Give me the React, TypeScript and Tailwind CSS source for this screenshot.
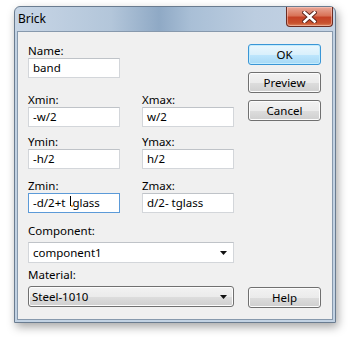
import React from "react";

const font = { fontFamily: '"Noto Sans", "Liberation Sans", sans-serif' };

const Label = ({ text, className = "" }: { text: string; className?: string }) => (
  <div className={"h-[14px] leading-[14px] text-[11.5px] text-black " + className}>{text}</div>
);

const Field = ({ value, focused }: { value: React.ReactNode; focused?: boolean }) => (
  <div
    className={
      "h-[20px] w-[92px] bg-white border pl-[4px] flex items-center text-[11.5px] text-black whitespace-nowrap " +
      (focused ? "border-[#5b9ad8]" : "border-[#d3d6da] border-t-[#bfc3c8]")
    }
  >
    {value}
  </div>
);

const Arrow = () => (
  <svg width="7" height="4" viewBox="0 0 7 4" className="ml-auto mr-[6px]">
    <path d="M0 0h7L3.5 4z" fill="#111" />
  </svg>
);

const Btn = ({ label, primary, className = "" }: { label: string; primary?: boolean; className?: string }) => (
  <div
    className={
      "h-[21px] w-[73px] rounded-[3px] border flex items-center justify-center text-[11.5px] text-black " +
      (primary
        ? "border-[#3a96d6] bg-[linear-gradient(#ebf7fd_0%,#d9f0fc_50%,#bee6fd_51%,#a7d9f5_100%)] shadow-[inset_0_0_0_1px_#c4ecfd] "
        : "border-[#707070] bg-[linear-gradient(#f2f2f2_0%,#ebebeb_50%,#dddddd_51%,#cfcfcf_100%)] shadow-[inset_0_0_0_1px_#fcfcfc] ") +
      className
    }
  >
    {label}
  </div>
);

export default function App() {
  return (
    <div className="w-[349px] h-[342px] bg-white pt-[6px] pl-[14px]" style={font}>
      <div className="w-[322px] h-[317px] flex flex-col border border-[#6a7c90] rounded-t-[6px] bg-[linear-gradient(90deg,#c8d6e6_0%,#b3c6da_30%,#8fa9c5_45%,#a9bfd6_55%,#bccde0_75%,#c4d3e4_100%)] shadow-[2px_4px_10px_rgba(0,0,0,0.35)]">
        <div className="h-[24px] flex items-start">
          <div className="ml-[3px] mt-[4px] text-[12px] leading-[16px] text-black">Brick</div>
          <div className="ml-auto mr-[2px] w-[47px] h-[20px] rounded-b-[4px] border border-t-0 border-[#6b2c22] bg-[linear-gradient(#e9a898_0%,#d97459_45%,#c54226_55%,#c8522f_85%,#dd8a62_100%)] flex items-center justify-center shadow-[inset_0_0_0_1px_rgba(255,210,200,0.5)]">
            <svg width="15" height="12" viewBox="0 0 15 12">
              <path d="M2.5 1.5L12.5 10.5M12.5 1.5L2.5 10.5" stroke="#5a231a" strokeWidth="4.4" strokeLinecap="square" />
              <path d="M2.5 1.5L12.5 10.5M12.5 1.5L2.5 10.5" stroke="#ffffff" strokeWidth="2.6" strokeLinecap="square" />
            </svg>
          </div>
        </div>
        <div className="flex-1 px-[2px] pb-[2px] bg-[#c2d2e3]">
          <div className="h-full border border-[#8799ad] bg-[#f0f0f0] pt-[12px] pb-[11px] px-[10px] flex gap-[14px]">
            <div className="w-[206px] flex flex-col">
              <Label text="Name:" />
              <Field value="band" />
              <div className="grid grid-cols-[92px_92px] gap-x-[22px] mt-[15px]">
                <Label text="Xmin:" />
                <Label text="Xmax:" />
                <Field value="-w/2" />
                <Field value="w/2" />
                <Label text="Ymin:" className="mt-[8px]" />
                <Label text="Ymax:" className="mt-[8px]" />
                <Field value="-h/2" />
                <Field value="h/2" />
                <Label text="Zmin:" className="mt-[10px]" />
                <Label text="Zmax:" className="mt-[10px]" />
                <Field
                  focused
                  value={
                    <>
                      -d/2+t
                      <span className="relative inline-block w-[7px] h-[14px]">
                        <span className="absolute left-[5px] top-[0px] w-[1px] h-[10px] bg-black" />
                        <span className="absolute left-[6px] top-[9px] w-[2px] h-[2px] bg-[#e8a23a]" />
                      </span>
                      glass
                    </>
                  }
                />
                <Field value="d/2- tglass" />
              </div>
              <Label text="Component:" className="mt-[11px]" />
              <div className="mt-[4px] h-[21px] bg-white border border-[#d3d6da] border-t-[#bfc3c8] pl-[4px] flex items-center text-[11.5px] text-black">
                component1
                <Arrow />
              </div>
              <Label text="Material:" className="mt-[5px]" />
              <div className="mt-[4px] h-[21px] rounded-[3px] border border-[#707070] bg-[linear-gradient(#f2f2f2_0%,#ebebeb_50%,#dddddd_51%,#cfcfcf_100%)] shadow-[inset_0_0_0_1px_#fcfcfc] pl-[3px] flex items-center text-[11.5px] text-black">
                Steel-1010
                <Arrow />
              </div>
            </div>
            <div className="w-[73px] flex flex-col">
              <Btn label="OK" primary />
              <Btn label="Preview" className="mt-[7px]" />
              <Btn label="Cancel" className="mt-[7px]" />
              <Btn label="Help" className="mt-auto" />
            </div>
          </div>
        </div>
      </div>
    </div>
  );
}
